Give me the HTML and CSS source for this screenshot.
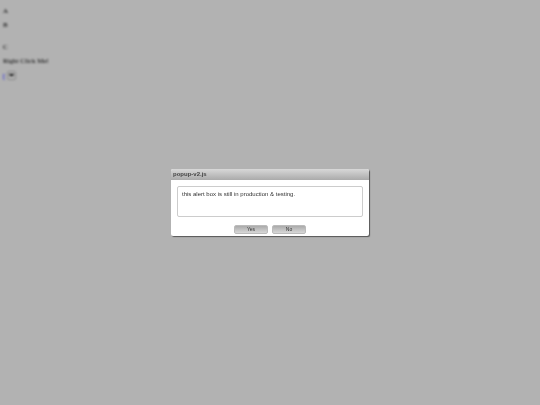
FILE: index.html
```
<!DOCTYPE html>
<html lang="en">
<head>
    <meta charset="UTF-8">
    <meta name="viewport" content="width=device-width, initial-scale=1.0">
    <title>popup-v2.js</title>
    <link rel="stylesheet" href="styles.css">
</head>
<body>
    <div class="page">
        <p>A</p>
        <p>B</p>
        <p class="spaced">C</p>
        <p>Right Click Me!</p>
        <div class="picker">
            <a href="#">[</a>
            <select aria-label="Options"><option></option></select>
        </div>
    </div>

    <div class="overlay">
        <div class="popup" role="dialog" aria-labelledby="popup-title">
            <div class="popup-title" id="popup-title">popup-v2.js</div>
            <div class="popup-body">
                <div class="popup-message">this alert box is still in production &amp; testing.</div>
                <div class="popup-buttons">
                    <button type="button">Yes</button>
                    <button type="button">No</button>
                </div>
            </div>
        </div>
    </div>
</body>
</html>
```
FILE: styles.css
```
body {
    margin: 0;
    background-color: #b2b2b2;
    font-family: "Liberation Sans", Arial, sans-serif;
}

/* page content behind the popup */
.page {
    padding: 7px 3px;
    font-family: "Liberation Serif", "Times New Roman", serif;
    font-size: 7px;
    line-height: 8px;
    color: #000;
    filter: blur(1px);
}

.page p {
    margin: 0 0 6px;
}

.page .spaced {
    margin-top: 14px;
}

.picker {
    display: flex;
    align-items: center;
}

.picker a {
    width: 4px;
    color: #0000ee;
    text-decoration: none;
}

.picker select {
    width: 9px;
    height: 9px;
    padding: 0;
    border: 1px solid #888;
    border-radius: 2px;
    appearance: none;
    background: linear-gradient(#111, #111) center 2px / 5px 1px no-repeat,
                linear-gradient(#111, #111) center 3px / 3px 1px no-repeat,
                #b2b2b2;
}

.overlay {
    position: fixed;
    inset: 0;
    display: flex;
    align-items: center;
    justify-content: center;
}

.popup {
    width: 198px;
    background-color: #fff;
    border-radius: 2px;
    box-shadow: 1px 1px 1px #555;
    overflow: hidden;
}

.popup-title {
    padding: 0 2px;
    background: linear-gradient(#d8d8d8, #aaa);
    font-size: 6px;
    font-weight: bold;
    line-height: 11px;
    color: #444;
}

.popup-body {
    padding: 6px 6px 2px;
}

.popup-message {
    box-sizing: border-box;
    height: 31px;
    padding: 4px;
    border: 1px solid #ccc;
    border-radius: 2px;
    font-size: 6px;
    line-height: 7px;
    color: #333;
}

.popup-buttons {
    display: flex;
    justify-content: center;
    gap: 4px;
    margin-top: 8px;
}

.popup-buttons button {
    width: 34px;
    height: 9px;
    padding: 0;
    border: 1px solid #bbb;
    border-radius: 2px;
    background: linear-gradient(#aaa, #d8d8d8);
    font-family: inherit;
    font-size: 5px;
    line-height: 7px;
    color: #333;
}
```
